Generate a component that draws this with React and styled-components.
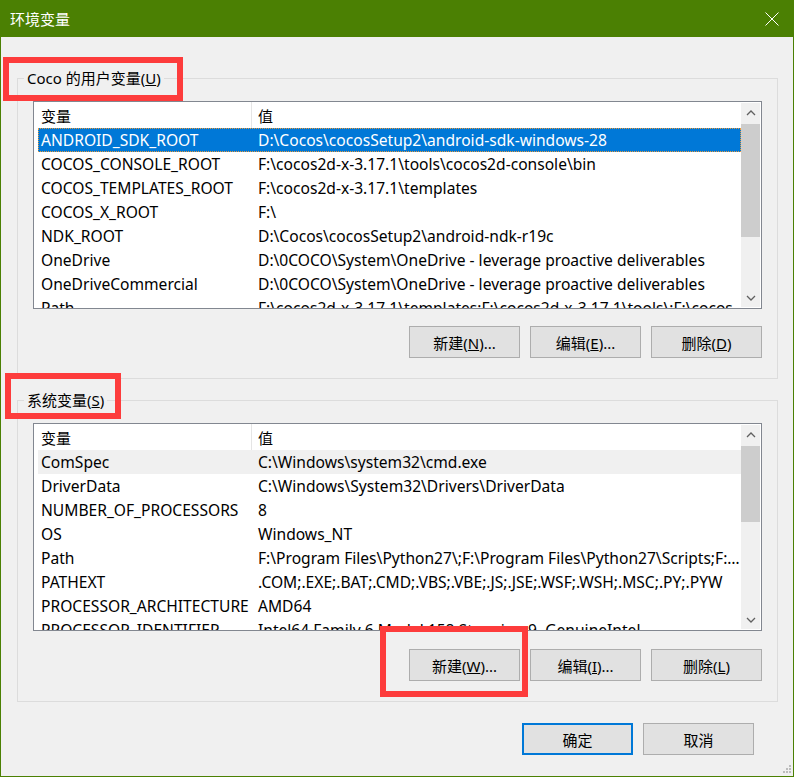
import React from 'react'
import styled, { createGlobalStyle } from 'styled-components'

const GlobalStyle = createGlobalStyle`
    html, body {
        margin: 0;
        padding: 0;
    }
    body {
        font-family: "Noto Sans", "Noto Sans CJK SC", sans-serif;
        font-size: 15px;
        color: #000;
        background: #fff;
    }
`

const Window = styled.div`
    position: relative;
    width: 794px;
    height: 777px;
    display: flex;
    flex-direction: column;
    box-sizing: border-box;
`
const TitleBar = styled.div`
    height: 37px;
    flex-shrink: 0;
    background: #4b8003;
    color: #fff;
    display: flex;
    align-items: center;
    justify-content: space-between;
    padding: 0 15px 0 10px;
    font-family: "Noto Sans CJK SC", sans-serif;
    font-size: 15px;
`
const Body = styled.div`
    flex: 1;
    background: #f0f0f0;
    border: 1px solid #4b8003;
    border-top: none;
    padding: 31px 15px 0 16px;
`
const Group = styled.fieldset`
    margin: ${props => props.second ? "11px 0 0" : "0"};
    min-width: 0;
    border: 1px solid #dcdcdc;
    padding: 13px 15px 20px;
`
const Legend = styled.legend`
    margin-left: -9px;
    padding: 0 3px;
    line-height: 20px;
    font-size: 15px;
`
const ListBox = styled.div`
    height: 208px;
    box-sizing: border-box;
    border: 1px solid #828790;
    background: #fff;
    display: flex;
`
const ListContent = styled.div`
    flex: 1;
    min-width: 0;
    overflow: hidden;
    padding-left: 4px;
`
const HeaderRow = styled.div`
    height: 26px;
    display: grid;
    grid-template-columns: 214px 1fr;
`
const HeaderCell = styled.div`
    display: flex;
    align-items: center;
    padding-left: ${props => props.first ? "3px" : "6px"};
    border-right: ${props => props.first ? "1px solid #e5e5e5" : "none"};
    font-family: "Noto Sans CJK SC", sans-serif;
`
const Row = styled.div`
    height: 24px;
    box-sizing: border-box;
    display: grid;
    grid-template-columns: 214px 1fr;
    line-height: 24px;
    font-size: 15.6px;
    white-space: nowrap;
    background: ${props => props.state === "selected" ? "#0078d7" : props.state === "hover" ? "#f0f0f0" : "transparent"};
    color: ${props => props.state === "selected" ? "#fff" : "#000"};
    outline: ${props => props.state === "selected" ? "1px dotted #e89a3c" : "none"};
    outline-offset: -1px;
`
const Cell = styled.div`
    overflow: hidden;
    text-overflow: ${props => props.first ? "clip" : "ellipsis"};
    padding-left: ${props => props.first ? "3px" : "6px"};
    padding-right: ${props => props.first ? "0" : "1px"};
`
const ScrollBar = styled.div`
    width: 19px;
    margin: 1px 1px 1px 0;
    background: #f0f0f0;
    display: flex;
    flex-direction: column;
`
const ScrollArrow = styled.div`
    height: 19px;
    flex-shrink: 0;
    display: flex;
    align-items: center;
    justify-content: center;
`
const Track = styled.div`
    flex: 1;
`
const Thumb = styled.div`
    margin-top: ${props => props.offset}px;
    height: ${props => props.size}px;
    background: #cdcdcd;
`
const ButtonRow = styled.div`
    display: flex;
    justify-content: flex-end;
    gap: 10px;
    margin-top: ${props => props.space || 17}px;
    padding-right: ${props => props.inset || 0}px;
`
const Button = styled.button`
    width: 111px;
    height: 32px;
    box-sizing: border-box;
    padding: 0;
    background: #e1e1e1;
    border: ${props => props.primary ? "2px solid #0078d7" : "1px solid #adadad"};
    font-family: "Noto Sans", "Noto Sans CJK SC", sans-serif;
    font-size: 15px;
    color: #000;
`
const Mark = styled.div`
    position: absolute;
    left: ${props => props.x}px;
    top: ${props => props.y}px;
    width: ${props => props.w}px;
    height: ${props => props.h}px;
    box-sizing: border-box;
    border: 6px solid #fd3c3c;
    pointer-events: none;
`
const Grip = styled.svg`
    position: absolute;
    right: 3px;
    bottom: 3px;
`

const userVars = [
    ["ANDROID_SDK_ROOT", String.raw`D:\Cocos\cocosSetup2\android-sdk-windows-28`, "selected"],
    ["COCOS_CONSOLE_ROOT", String.raw`F:\cocos2d-x-3.17.1\tools\cocos2d-console\bin`],
    ["COCOS_TEMPLATES_ROOT", String.raw`F:\cocos2d-x-3.17.1\templates`],
    ["COCOS_X_ROOT", String.raw`F:\ `],
    ["NDK_ROOT", String.raw`D:\Cocos\cocosSetup2\android-ndk-r19c`],
    ["OneDrive", String.raw`D:\0COCO\System\OneDrive - leverage proactive deliverables`],
    ["OneDriveCommercial", String.raw`D:\0COCO\System\OneDrive - leverage proactive deliverables`],
    ["Path", String.raw`F:\cocos2d-x-3.17.1\templates;F:\cocos2d-x-3.17.1\tools\;F:\cocos`],
]

const systemVars = [
    ["ComSpec", String.raw`C:\Windows\system32\cmd.exe`, "hover"],
    ["DriverData", String.raw`C:\Windows\System32\Drivers\DriverData`],
    ["NUMBER_OF_PROCESSORS", "8"],
    ["OS", "Windows_NT"],
    ["Path", String.raw`F:\Program Files\Python27\;F:\Program Files\Python27\Scripts;F:\Program Files\Git\cmd`],
    ["PATHEXT", ".COM;.EXE;.BAT;.CMD;.VBS;.VBE;.JS;.JSE;.WSF;.WSH;.MSC;.PY;.PYW"],
    ["PROCESSOR_ARCHITECTURE", "AMD64"],
    ["PROCESSOR_IDENTIFIER", "Intel64 Family 6 Model 158 Stepping 9, GenuineIntel"],
]

const Chevron = ({ up }) => (
    <svg width="10" height="6" viewBox="0 0 10 6">
        <polyline
            points={up ? "1,5 5,1 9,5" : "1,1 5,5 9,1"}
            fill="none"
            stroke="#606060"
            strokeWidth="1.3"
        />
    </svg>
)

const VarList = ({ rows, thumbOffset, thumbSize }) => (
    <ListBox>
        <ListContent>
            <HeaderRow>
                <HeaderCell first>变量</HeaderCell>
                <HeaderCell>值</HeaderCell>
            </HeaderRow>
            {rows.map((r, i) => (
                <Row key={i} state={r[2]}>
                    <Cell first>{r[0]}</Cell>
                    <Cell>{r[1]}</Cell>
                </Row>
            ))}
        </ListContent>
        <ScrollBar>
            <ScrollArrow><Chevron up /></ScrollArrow>
            <Track>
                <Thumb offset={thumbOffset} size={thumbSize} />
            </Track>
            <ScrollArrow><Chevron /></ScrollArrow>
        </ScrollBar>
    </ListBox>
)

const App = () => {
    return (
        <Window>
            <GlobalStyle />
            <TitleBar>
                <span>环境变量</span>
                <svg width="14" height="14" viewBox="0 0 14 14">
                    <line x1="0.5" y1="0.5" x2="13.5" y2="13.5" stroke="#fff" strokeWidth="1" />
                    <line x1="13.5" y1="0.5" x2="0.5" y2="13.5" stroke="#fff" strokeWidth="1" />
                </svg>
            </TitleBar>
            <Body>
                <Group>
                    <Legend>Coco 的用户变量(<u>U</u>)</Legend>
                    <VarList rows={userVars} thumbOffset={2} thumbSize={113} />
                    <ButtonRow>
                        <Button>新建(<u>N</u>)...</Button>
                        <Button>编辑(<u>E</u>)...</Button>
                        <Button>删除(<u>D</u>)</Button>
                    </ButtonRow>
                </Group>
                <Group second>
                    <Legend>系统变量(<u>S</u>)</Legend>
                    <VarList rows={systemVars} thumbOffset={2} thumbSize={76} />
                    <ButtonRow space={18}>
                        <Button>新建(<u>W</u>)...</Button>
                        <Button>编辑(<u>I</u>)...</Button>
                        <Button>删除(<u>L</u>)</Button>
                    </ButtonRow>
                </Group>
                <ButtonRow space={21} inset={24}>
                    <Button primary>确定</Button>
                    <Button>取消</Button>
                </ButtonRow>
            </Body>
            <Mark x={3} y={57} w={180} h={44} />
            <Mark x={5} y={373} w={116} h={46} />
            <Mark x={380} y={626} w={148} h={71} />
            <Grip width="10" height="10" viewBox="0 0 10 10">
                {[[8, 0], [8, 3], [5, 3], [8, 6], [5, 6], [2, 6]].map(([x, y], i) => (
                    <rect key={i} x={x} y={y + 1} width="2" height="2" fill="#bcbcbc" />
                ))}
            </Grip>
        </Window>
    )
}

export default App
